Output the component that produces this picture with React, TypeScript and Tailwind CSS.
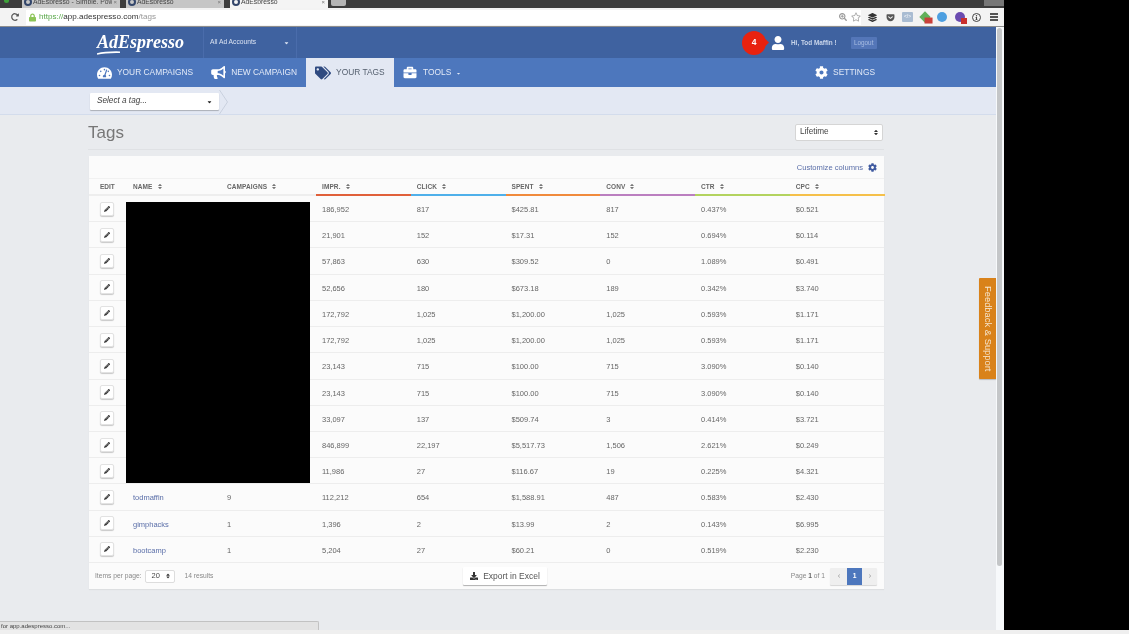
import {
  FaBriefcase,
  FaBullhorn,
  FaCaretDown,
  FaChevronLeft,
  FaChevronRight,
  FaCog,
  FaDownload,
  FaGetPocket,
  FaInfo,
  FaLayerGroup,
  FaLock,
  FaPencilAlt,
  FaRedoAlt,
  FaRegStar,
  FaSearchPlus,
  FaSort,
  FaTachometerAlt,
  FaTags,
  FaUser,
} from "react-icons/fa";

const rows = [
  { name: "", campaigns: "", values: ["186,952", "817", "$425.81", "817", "0.437%", "$0.521"] },
  { name: "", campaigns: "", values: ["21,901", "152", "$17.31", "152", "0.694%", "$0.114"] },
  { name: "", campaigns: "", values: ["57,863", "630", "$309.52", "0", "1.089%", "$0.491"] },
  { name: "", campaigns: "", values: ["52,656", "180", "$673.18", "189", "0.342%", "$3.740"] },
  { name: "", campaigns: "", values: ["172,792", "1,025", "$1,200.00", "1,025", "0.593%", "$1.171"] },
  { name: "", campaigns: "", values: ["172,792", "1,025", "$1,200.00", "1,025", "0.593%", "$1.171"] },
  { name: "", campaigns: "", values: ["23,143", "715", "$100.00", "715", "3.090%", "$0.140"] },
  { name: "", campaigns: "", values: ["23,143", "715", "$100.00", "715", "3.090%", "$0.140"] },
  { name: "", campaigns: "", values: ["33,097", "137", "$509.74", "3", "0.414%", "$3.721"] },
  { name: "", campaigns: "", values: ["846,899", "22,197", "$5,517.73", "1,506", "2.621%", "$0.249"] },
  { name: "", campaigns: "", values: ["11,986", "27", "$116.67", "19", "0.225%", "$4.321"] },
  { name: "todmaffin", campaigns: "9", values: ["112,212", "654", "$1,588.91", "487", "0.583%", "$2.430"] },
  { name: "gimphacks", campaigns: "1", values: ["1,396", "2", "$13.99", "2", "0.143%", "$6.995"] },
  { name: "bootcamp", campaigns: "1", values: ["5,204", "27", "$60.21", "0", "0.519%", "$2.230"] },
];

const metricHeads = [
  { label: "IMPR.", line: "border-[#e0603a]" },
  { label: "CLICK", line: "border-[#4fb0ea]" },
  { label: "SPENT", line: "border-[#f08a3c]" },
  { label: "CONV", line: "border-[#bb7fc0]" },
  { label: "CTR", line: "border-[#b3d35f]" },
  { label: "CPC", line: "border-[#f5c04a]" },
];

const gridCols = "grid grid-cols-[37px_94px_96px_repeat(6,94.75px)]";

function Tab({ label, active }: { label: string; active?: boolean }) {
  return (
    <div
      className={`flex h-[8px] w-[98px] items-start gap-[1px] overflow-hidden pl-[2px] ${
        active ? "bg-[#f4f4f4]" : "bg-[#c6c6c6]"
      }`}
    >
      <span className="mt-[-2px] h-[8px] w-[8px] shrink-0 rounded-full border-2 border-[#33466b]" />
      <span className="min-w-0 flex-1 overflow-hidden text-[6.8px] leading-[4px] whitespace-nowrap text-[#444]">
        {label}
      </span>
      <span className="pr-[3px] text-[6px] leading-[4px] text-[#777]">×</span>
    </div>
  );
}

function SortHead({ label }: { label: string }) {
  return (
    <span className="flex items-center gap-[5px] text-[6.5px] font-bold tracking-[0.1px] text-[#666]">
      {label}
      <FaSort className="h-[7px] w-[4px] text-[#777]" />
    </span>
  );
}

function NavItem({
  icon,
  label,
  className,
}: {
  icon: React.ReactNode;
  label: string;
  className?: string;
}) {
  return (
    <div className={`flex items-center gap-[5px] text-[8.4px] text-[#e3eaf7] ${className ?? ""}`}>
      {icon}
      <span>{label}</span>
    </div>
  );
}

export default function App() {
  return (
    <div className="flex h-[634px] w-[1129px] flex-col overflow-hidden bg-[#efefef] font-['Liberation_Sans',Arial,sans-serif] blur-[0.4px]">
      <div className="flex h-[630px]">
        <div className="relative flex w-[1004px] flex-col">
          {/* browser tabs */}
          <div className="flex h-[8px] items-start bg-[#3d3d3d]">
            <div className="ml-[4px] h-[3px] w-[5px] rounded-b-full bg-[#3fa33a]" />
            <div className="ml-[13px] flex gap-[6px]">
              <Tab label="AdEspresso - Simple, Pow" />
              <Tab label="AdEspresso" />
              <Tab label="AdEspresso" active />
            </div>
            <div className="ml-[3px] h-[6px] w-[15px] rounded-b-[2px] bg-[#b5b5b5]" />
            <div className="ml-auto h-[6px] w-[20px] bg-[#777]" />
          </div>

          {/* browser toolbar */}
          <div className="flex h-[19px] items-center border-b border-[#8d8d8d] bg-[#f3f3f3]">
            <FaRedoAlt className="ml-[11px] h-[8px] w-[8px] text-[#555]" />
            <div className="ml-[7px] flex h-[15px] w-[835px] items-center bg-white pl-[3px]">
              <FaLock className="h-[9px] w-[7px] text-[#8cc457]" />
              <span className="ml-[3px] text-[8.1px] text-[#555]">
                <span className="text-[#5aa84a]">https://</span>
                <span className="text-[#333]">app.adespresso.com</span>
                <span className="text-[#999]">/tags</span>
              </span>
              <FaSearchPlus className="ml-auto h-[8px] w-[8px] text-[#999]" />
              <FaRegStar className="ml-[4px] h-[10px] w-[10px] text-[#aaa]" />
            </div>
            <div className="ml-[7px] flex items-center">
              <FaLayerGroup className="h-[9px] w-[9px] text-[#333]" />
              <FaGetPocket className="ml-[9px] h-[9px] w-[9px] text-[#555]" />
              <span className="ml-[7px] flex h-[10px] w-[11px] items-center justify-center rounded-[1px] bg-[#a9bcd2] text-[5px] text-white">
                {"</>"}
              </span>
              <span className="relative ml-[8px] h-[8px] w-[8px] rotate-45 bg-[#62b05a]">
                <span className="absolute top-[1px] left-[5px] h-[6px] w-[8px] -rotate-45 bg-[#c9403a]" />
              </span>
              <span className="ml-[8px] h-[10px] w-[10px] rounded-full bg-[#4d9fe0]" />
              <span className="relative ml-[8px] h-[10px] w-[10px] rounded-full bg-[#6a4bb0]">
                <span className="absolute top-[6px] left-[6px] h-[6px] w-[6px] bg-[#c9302c]" />
              </span>
              <span className="ml-[7px] flex h-[9px] w-[9px] items-center justify-center rounded-full border border-[#444]">
                <FaInfo className="h-[5px] w-[3px] text-[#444]" />
              </span>
              <span className="ml-[9px] flex w-[8px] flex-col gap-[1px]">
                <span className="h-[2px] bg-[#555]" />
                <span className="h-[2px] bg-[#555]" />
                <span className="h-[2px] bg-[#555]" />
              </span>
            </div>
          </div>

          <div className="flex flex-1">
            {/* app page */}
            <div className="flex w-[996px] flex-col bg-[#e9ebee]">
              <div className="flex h-[31px] items-center bg-[#3f62a0] pl-[97px]">
                <div className="relative w-[106px]">
                  <span className="font-['Liberation_Serif',serif] text-[18px] leading-none font-bold text-white italic">
                    AdEspresso
                  </span>
                  <svg className="absolute top-[20px] left-0" width="24" height="4" viewBox="0 0 24 4">
                    <path d="M0 3 C6 1.5 14 1 23 1.2" stroke="#fff" strokeWidth="1.6" fill="none" />
                  </svg>
                </div>
                <div className="flex h-full w-[94px] items-center border-x border-[#4a6cab] pr-[7px] pl-[6px] text-[6.7px] text-[#dbe3f2]">
                  <span>All Ad Accounts</span>
                  <FaCaretDown className="ml-auto h-[6px] w-[5px] text-[#dbe3f2]" />
                </div>
                <div className="relative ml-[445px] flex h-[24px] w-[24px] items-center justify-center rounded-full bg-[#e8220f] text-[8.5px] font-bold text-white">
                  4
                  <span className="absolute top-[9.5px] right-[-2px] h-[5px] w-[5px] rotate-45 bg-[#e8220f]" />
                </div>
                <FaUser className="ml-[5px] h-[14px] w-[14px] text-white" />
                <span className="ml-[6px] text-[6.4px] font-bold text-[#c9d5ea]">Hi, Tod Maffin !</span>
                <span className="ml-[14px] flex h-[12px] w-[26px] items-center justify-center rounded-[1px] bg-[#5476b8] text-[6.4px] text-[#a8bde2]">
                  Logout
                </span>
              </div>

              <div className="flex h-[29px] items-stretch bg-[#4d77bd] pl-[97px]">
                <NavItem
                  icon={<FaTachometerAlt className="h-[14px] w-[15px] text-white" />}
                  label="YOUR CAMPAIGNS"
                />
                <NavItem
                  icon={<FaBullhorn className="h-[13px] w-[15px] text-white" />}
                  label="NEW CAMPAIGN"
                  className="ml-[18px]"
                />
                <NavItem
                  icon={<FaTags className="h-[14px] w-[16px] text-[#2f4a80]" />}
                  label="YOUR TAGS"
                  className="ml-[9px] w-[88px] bg-[#e3e8f3] pl-[9px] !text-[#55606f]"
                />
                <NavItem
                  icon={<FaBriefcase className="h-[13px] w-[16px] text-white" />}
                  label="TOOLS"
                  className="ml-[8px]"
                />
                <FaCaretDown className="mt-[13px] ml-[5px] h-[5px] w-[5px] text-[#e3eaf7]" />
                <div className="ml-auto flex items-center gap-[5px] pr-[121px] text-[8.4px] text-[#e3eaf7]">
                  <FaCog className="h-[13px] w-[13px] text-white" />
                  SETTINGS
                </div>
              </div>

              <div className="flex h-[28px] items-center border-b border-[#d3dcec] bg-[#e3e8f3] pt-[2px] pl-[90px]">
                <div className="flex h-[17px] w-[129px] items-center rounded-[1px] bg-white pr-[7px] pl-[7px] text-[8.2px] text-[#444] italic shadow-[0_1px_1px_rgba(0,0,0,0.25)]">
                  Select a tag...
                  <FaCaretDown className="ml-auto h-[6px] w-[5px] text-[#222]" />
                </div>
                <svg width="10" height="24" viewBox="0 0 10 24">
                  <path d="M0.5 0 L8.5 12 L0.5 24" stroke="#c9d1de" strokeWidth="1" fill="none" />
                </svg>
              </div>

              {/* tags panel */}
              <div className="flex items-center justify-between pt-[8px] pr-[113px] pl-[88px]">
                <h1 className="text-[17px] leading-[19px] font-normal text-[#777]">Tags</h1>
                <div className="flex h-[17px] w-[88px] items-center rounded-[2px] border border-[#d5d5d5] bg-white pr-[4px] pl-[4px] text-[8.2px] text-[#444]">
                  Lifetime
                  <FaSort className="ml-auto h-[7px] w-[4px] text-[#333]" />
                </div>
              </div>
              <div className="mt-[7px] ml-[88px] h-px w-[796px] bg-[#dfe1e4]" />

              <div className="relative mt-[6px] ml-[89px] w-[795px] bg-[#fbfbfb] text-[7.5px] text-[#666] shadow-[0_1px_1px_rgba(0,0,0,0.05)]">
                <div className="flex h-[22px] items-center justify-end pt-[1px] pr-[7px] text-[7.6px] text-[#5a6ea8]">
                  Customize columns
                  <FaCog className="ml-[5px] h-[9px] w-[9px] text-[#3f5aa0]" />
                </div>

                <div className={`${gridCols} h-[18px] border-t border-[#f1f1f1]`}>
                  <div className="border-b-2 border-[#eeeeee] pt-[3px] pl-[11px] text-[6.5px] font-bold text-[#666]">
                    EDIT
                  </div>
                  <div className="border-b-2 border-[#eeeeee] pt-[3px] pl-[7px]">
                    <SortHead label="NAME" />
                  </div>
                  <div className="border-b-2 border-[#eeeeee] pt-[3px] pl-[7px]">
                    <SortHead label="CAMPAIGNS" />
                  </div>
                  {metricHeads.map((head) => (
                    <div key={head.label} className={`border-b-2 ${head.line} pt-[3px] pl-[6px]`}>
                      <SortHead label={head.label} />
                    </div>
                  ))}
                </div>

                {rows.map((row, i) => (
                  <div key={i} className={`${gridCols} h-[26.23px] items-center border-b border-[#ededed]`}>
                    <div className="pl-[11px]">
                      <button
                        type="button"
                        className="flex h-[14px] w-[14px] items-center justify-center rounded-[2px] border border-[#e2e2e2] bg-white shadow-[0_1px_1px_rgba(0,0,0,0.2)]"
                      >
                        <FaPencilAlt className="h-[6px] w-[6px] text-[#333]" />
                      </button>
                    </div>
                    <div className="pt-[2px] pl-[7px] text-[#5a6ea8]">{row.name}</div>
                    <div className="pt-[2px] pl-[7px]">{row.campaigns}</div>
                    {row.values.map((value, j) => (
                      <div key={j} className="pt-[2px] pl-[6px]">
                        {value}
                      </div>
                    ))}
                  </div>
                ))}

                <div className="flex h-[26px] items-center text-[6.7px] text-[#888]">
                  <div className="flex w-[374px] items-center pl-[6px]">
                    Items per page:
                    <div className="ml-[4px] flex h-[13px] w-[30px] items-center rounded-[2px] border border-[#ddd] bg-white pr-[4px] pl-[5px] text-[7.5px] text-[#444]">
                      20
                      <FaSort className="ml-auto h-[6px] w-[4px] text-[#333]" />
                    </div>
                    <span className="ml-[9px]">14 results</span>
                  </div>
                  <div className="flex h-[18px] w-[84px] items-center justify-center gap-[5px] rounded-[1px] bg-white text-[8.5px] text-[#555] shadow-[0_1px_1px_rgba(0,0,0,0.3)]">
                    <FaDownload className="h-[8px] w-[8px] text-[#333]" />
                    Export in Excel
                  </div>
                  <div className="ml-auto flex items-center pr-[7px]">
                    <span>
                      Page <b className="text-[#666]">1</b> of 1
                    </span>
                    <div className="ml-[5px] flex h-[17px] w-[47px] overflow-hidden rounded-[1px] bg-[#efefef] shadow-[0_1px_1px_rgba(0,0,0,0.15)]">
                      <span className="flex w-[17px] items-center justify-center">
                        <FaChevronLeft className="h-[4px] w-[4px] text-[#aaa]" />
                      </span>
                      <span className="flex w-[15px] items-center justify-center bg-[#4d77bd] font-bold text-white">
                        1
                      </span>
                      <span className="flex w-[15px] items-center justify-center">
                        <FaChevronRight className="h-[4px] w-[4px] text-[#aaa]" />
                      </span>
                    </div>
                  </div>
                </div>

                {/* redacted names */}
                <div className="absolute top-[46px] left-[37px] h-[281px] w-[184px] bg-black" />
              </div>
            </div>

            {/* page scrollbar */}
            <div className="w-[8px] bg-[#f7f9fb] pt-px pl-px">
              <div className="h-[538px] w-[5px] rounded-full bg-[#c4c6c8]" />
            </div>
          </div>

          {/* feedback tab */}
          <div className="absolute top-[278px] left-[979px] flex h-[101px] w-[17px] items-center justify-center rounded-l-[1px] bg-[#d9821a] text-[9.4px] text-[#f6e6cf] shadow-[0_1px_1px_rgba(0,0,0,0.2)] [writing-mode:vertical-rl]">
            Feedback &amp; Support
          </div>

          {/* link status bubble */}
          <div className="absolute top-[621px] left-0 flex h-[9px] w-[319px] items-center rounded-tr-[2px] border-t border-r border-[#c2c2c2] bg-[#e3e3e3] pl-px text-[6px] text-[#444]">
            for app.adespresso.com...
          </div>
        </div>
        <div className="flex-1 bg-black" />
      </div>
    </div>
  );
}
